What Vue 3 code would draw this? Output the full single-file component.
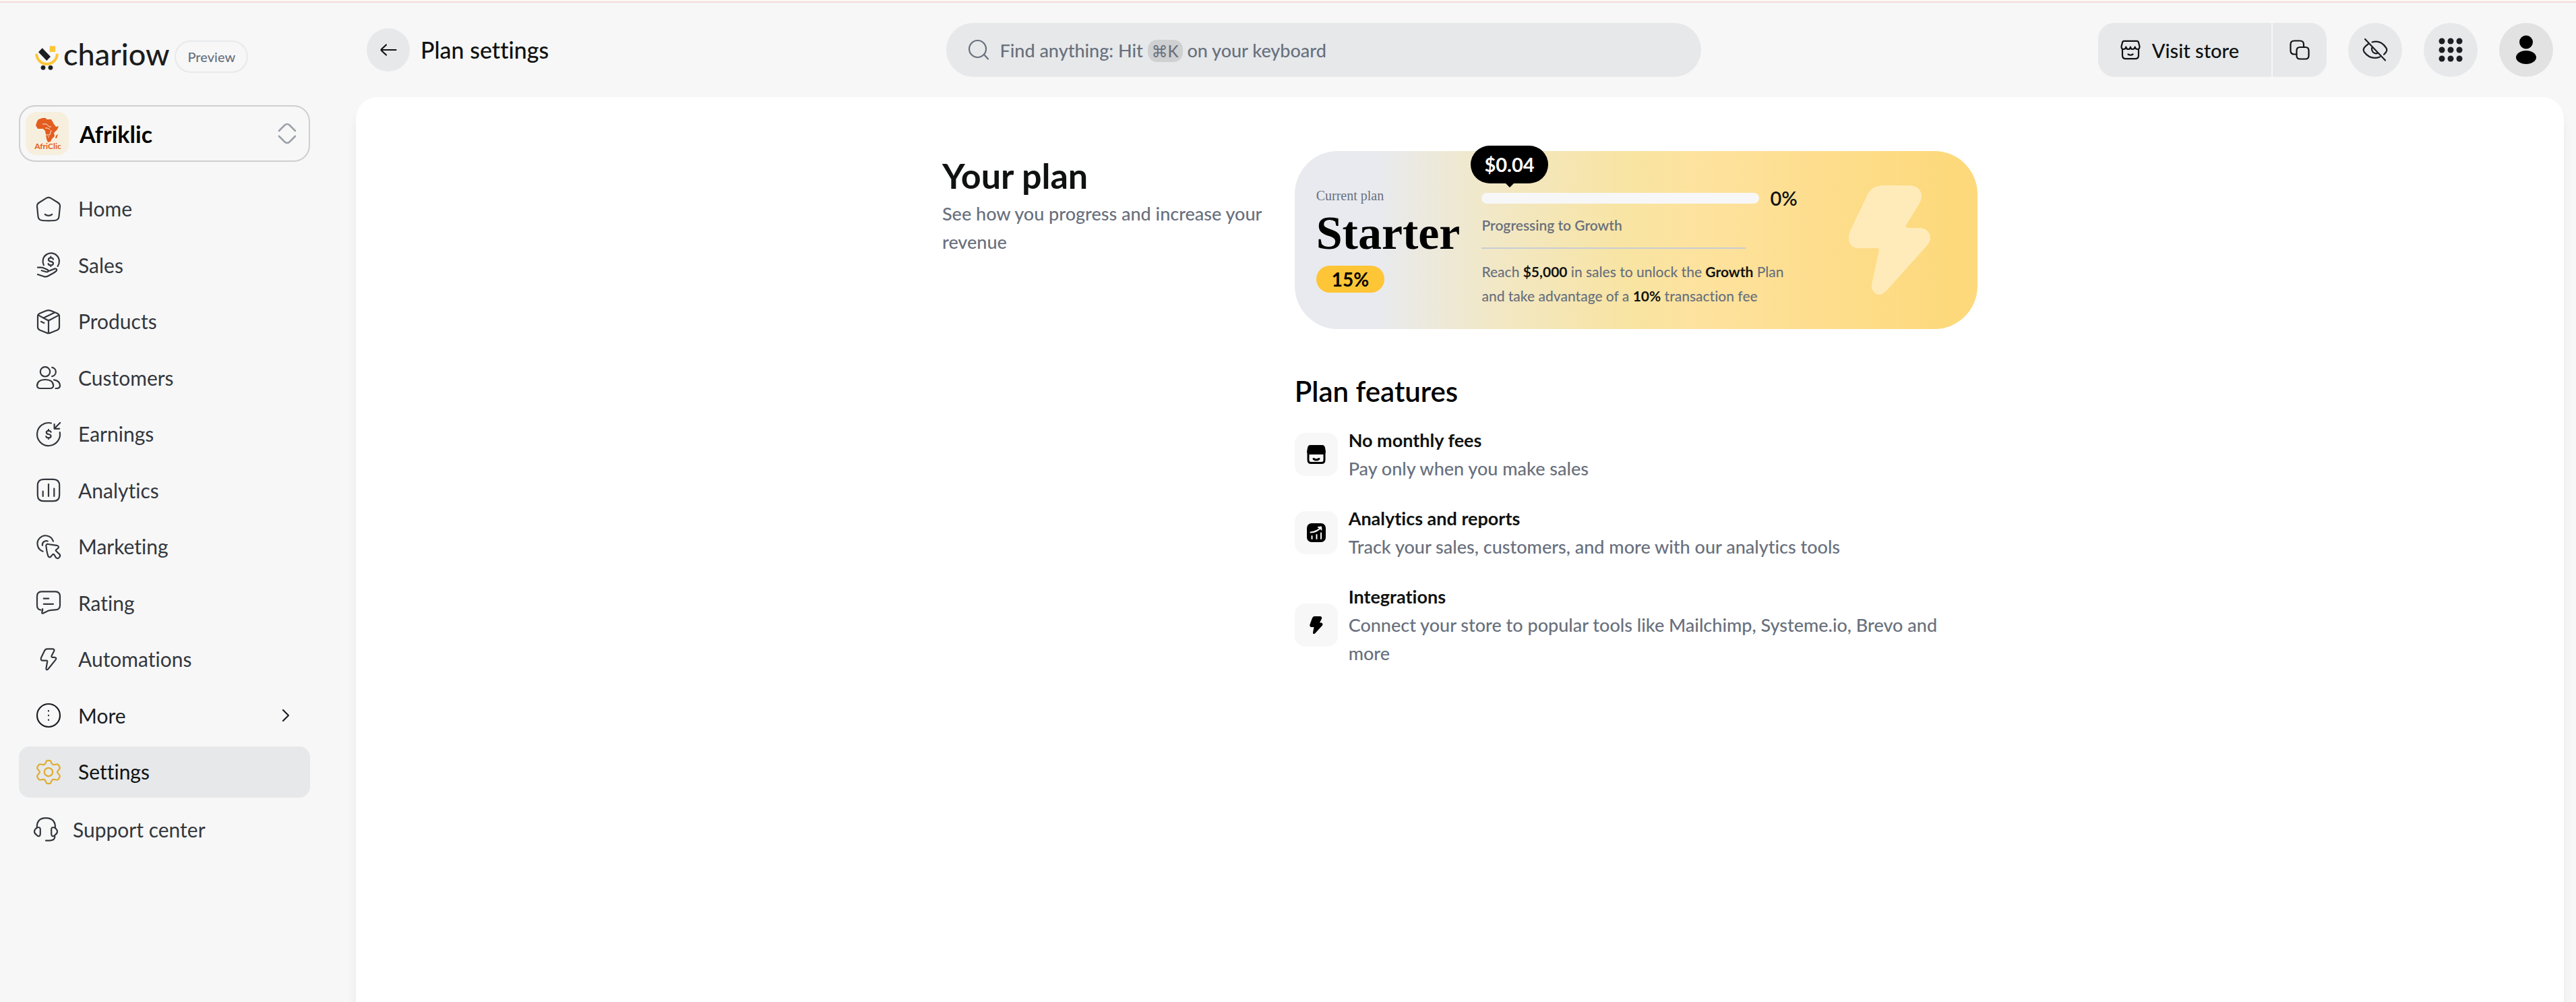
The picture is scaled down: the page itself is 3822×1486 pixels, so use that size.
<script setup>
const navItems = [
  { label: 'Home', icon: 'home' },
  { label: 'Sales', icon: 'sales' },
  { label: 'Products', icon: 'products' },
  { label: 'Customers', icon: 'customers' },
  { label: 'Earnings', icon: 'earnings' },
  { label: 'Analytics', icon: 'analytics' },
  { label: 'Marketing', icon: 'marketing' },
  { label: 'Rating', icon: 'rating' },
  { label: 'Automations', icon: 'automations' },
  { label: 'More', icon: 'more', strong: true, expandable: true },
  { label: 'Settings', icon: 'settings', active: true },
]

const icons = {
  home: ['M17 3.6Q20 2 23 3.6L34 10.5Q37.3 12.7 37 16L35.5 31Q35 36.5 29 37Q20 37.6 11 37Q5 36.5 4.5 31L3 16Q2.7 12.7 6 10.5Z', 'M14.8 28Q20 31.6 25.2 28'],
  sales: ['M12.9 20.2A12.2 12.2 0 1 1 33.6 21.8', 'M27 11.6Q26.5 9.3 23.3 9.3Q19.9 9.3 19.9 12Q19.9 14.3 23.3 14.8Q27 15.3 27 17.7Q27 20.3 23.3 20.3Q20 20.3 19.6 18M23.3 7.6V9.3M23.3 20.3V22', 'M4 23.7H8.5Q11.5 23.7 14.5 25.3L18.5 27Q20.8 28.6 18.8 30Q17.5 30.6 15.8 30L9.8 28.2', 'M19.6 29.2L29 25.6Q31.8 25 32.2 27Q32.4 28.8 28 31.5L19.5 36.3Q16 38.2 13 37L4 34'],
  products: ['M17.3 3.6Q20 2.6 22.7 3.6L33 7.8Q36 9.2 36 12V28Q36 31 33 32.5L23 36.6Q20 37.7 17 36.6L7 32.5Q4 31 4 28V12Q4 9.2 7 7.8Z', 'M4.7 10.4L17.5 17.2Q20 18.6 22.5 17.2L35.3 10.4M20 18.6V37', 'M12.5 14.4L28.6 6.8M9 20L13.4 22'],
  customers: ['M22.2 11.3A7.2 7.2 0 1 1 7.8 11.3A7.2 7.2 0 1 1 22.2 11.3Z', 'M25.2 4.8A6.8 6.8 0 0 1 25.2 18.2', 'M8 36H22Q27 36 27.2 32Q26.8 23 15.1 23Q3.4 23 3 32Q3.2 36 8 36Z', 'M28 23.4Q36.6 24.6 37.1 31.8Q37 35.9 32 36H30.5'],
  earnings: ['M24 3.5A17 17 0 1 0 36.8 17.2', 'M37.2 3L29 11.3M28.6 5V11.8H36.2', 'M23.6 16.8Q23 14.8 20 14.8Q16.8 14.8 16.8 17.2Q16.8 19.5 20 20Q23.6 20.5 23.6 22.8Q23.6 25.3 20 25.3Q16.8 25.3 16.4 23.2M20 13V14.8M20 25.3V27'],
  analytics: ['M13 3.8H27Q36.2 3.8 36.2 13V27Q36.2 36.2 27 36.2H13Q3.8 36.2 3.8 27V13Q3.8 3.8 13 3.8Z', 'M11.7 21.7V29M20 11V29M28.3 17.5V29'],
  marketing: ['M11.7 26.7A12 12 0 1 1 27 11.8', 'M10.9 17.8A5.8 5.8 0 0 1 18.8 11.6', 'M16.4 18.6Q16.2 15.6 19.2 16L31.8 17.8Q36.6 19.2 34.2 22L31 24.6Q30.4 25.4 31.2 26.2L36 30.6Q38.2 33 36.2 35.4Q33.8 38.4 31 36L28.4 31.6Q27.2 30 26 31.4L23.6 34.4Q21.2 36.8 19.4 33.6Q17.4 28 16.4 18.6Z'],
  rating: ['M8.6 30.6Q3 30 3 24V10.4Q3 3.6 9.8 3.4H30.2Q37 3.6 37 10.4V23.4Q37 30.2 30.2 30.4L22 31.2Q19 31.8 16 33.6L12 35.6Q10 36.2 10.2 34Q11.4 31 11.2 29', 'M12.8 13.7H20.2M12.8 21.8H27'],
  automations: ['M18.4 4.4H26Q29.4 4.6 28.2 7.6L24.6 14.4Q23.8 16.6 26 16.8H29Q32.6 17.4 30.6 20.4L19.4 34.2Q16.8 36.8 16.4 33.6L18.2 23.2Q18.4 21.6 16.8 21.6H11.4Q7.6 21.2 9 17.6L14.2 6.8Q15.4 4.4 18.4 4.4Z'],
  more: ['M37 20A17 17 0 1 1 3 20A17 17 0 1 1 37 20Z', 'M20 13.2V13.4M20 19.9V20.1M20 26.6V26.8'],
  settings: ['M16.3 5Q17 2.9 19 2.9H21Q23 2.9 23.7 5Q24.7 8.6 27.2 9.1Q28.6 9.3 31.4 8.5Q33.8 7.9 35 9.9L36.4 12.4Q37.4 14.4 35.8 16Q33 18.6 33 20Q33 21.4 35.8 24Q37.4 25.6 36.4 27.6L35 30.1Q33.8 32.1 31.4 31.5Q28.6 30.7 27.2 30.9Q24.7 31.4 23.7 35Q23 37.1 21 37.1H19Q17 37.1 16.3 35Q15.3 31.4 12.8 30.9Q11.4 30.7 8.6 31.5Q6.2 32.1 5 30.1L3.6 27.6Q2.6 25.6 4.2 24Q7 21.4 7 20Q7 18.6 4.2 16Q2.6 14.4 3.6 12.4L5 9.9Q6.2 7.9 8.6 8.5Q11.4 9.3 12.8 9.1Q15.3 8.6 16.3 5Z', 'M26.2 20A6.2 6.2 0 1 1 13.8 20A6.2 6.2 0 1 1 26.2 20Z'],
  support: ['M6.8 17V15.4Q7.4 3.2 20 3.1Q33 3.2 34 15.4V17', 'M7.6 17.2Q11.8 16.2 11.8 20V27Q11.6 30.6 8.2 30L6 28Q3 26 3 23.2Q3 21 5 19Z', 'M32.4 17.2Q28.2 16.2 28.2 20V27Q28.4 30.6 31.8 30L34 28Q37 26 37 23.2Q37 21 35 19Z', 'M33.4 30.6Q33.4 36.2 26 36.6H20'],
}

const features = [
  { icon: 'store', title: 'No monthly fees', text: 'Pay only when you make sales' },
  { icon: 'chart', title: 'Analytics and reports', text: 'Track your sales, customers, and more with our analytics tools' },
  { icon: 'bolt', title: 'Integrations', text: 'Connect your store to popular tools like Mailchimp, Systeme.io, Brevo and more' },
]
</script>

<template>
  <div class="app">
    <div class="strip"></div>
    <div class="shell">
      <aside class="sidebar">
        <div class="brand">
          <svg class="brand-mark" viewBox="0 0 36 40" aria-hidden="true">
            <path d="M2.2 15.7A15.3 15.3 0 0 0 32.8 15.7" fill="none" stroke="#fec536" stroke-width="4" />
            <rect x="21.7" y="4.3" width="8.4" height="8.7" fill="#fec536" />
            <path d="M10.7 7.3L23 20L17.3 26L5 13.3Z" fill="#1c1d1e" />
            <circle cx="12" cy="36.3" r="3.4" fill="#1c1d1e" />
            <circle cx="23" cy="36.3" r="3.4" fill="#1c1d1e" />
          </svg>
          <span class="brand-name">chariow</span>
          <span class="brand-tag">Preview</span>
        </div>

        <div class="store-picker">
          <svg class="store-logo" viewBox="0 0 64 64" aria-hidden="true">
            <rect width="64" height="64" rx="16" fill="#f7efdd" />
            <path d="M19 11L25 9L30 9L31 11L38 11L42 18L45 22L49 21L47 26L42 31L43 36L39 40L37 44L33 45L31 40L30 34L29 28L26 25L18 25L15 20L17 14Z" fill="#e35d20" />
            <path d="M48 33L46 39L44 39L45 35Z" fill="#e35d20" />
            <path d="M22 25L25 34H36L38 27M26 36V38M34 36V38M25 18H31L35 22H38M29 24H33L36 26" fill="none" stroke="#f7efdd" stroke-width="1" />
            <text x="33" y="55" text-anchor="middle" font-size="12" font-weight="700" fill="#e35d20">AfriClic</text>
          </svg>
          <select class="store-select" aria-label="Store">
            <option>Afriklic</option>
          </select>
          <svg class="store-arrows" viewBox="0 0 32 36" aria-hidden="true">
            <path d="M4 14L12.5 5.5Q16 2.5 19.5 5.5L28 14M4 22L12.5 30.5Q16 33.5 19.5 30.5L28 22" />
          </svg>
        </div>

        <nav class="nav">
          <a v-for="item in navItems" :key="item.label" href="#" class="nav-link" :class="{ active: item.active, strong: item.strong }">
            <svg class="icon" :class="item.icon" viewBox="0 0 40 40" aria-hidden="true">
              <path v-for="d in icons[item.icon]" :key="d" :d="d" />
            </svg>
            <span>{{ item.label }}</span>
            <svg v-if="item.expandable" class="chevron" viewBox="0 0 16 20" aria-hidden="true"><path d="M4 2L12 10L4 18" /></svg>
          </a>
        </nav>

        <a href="#" class="nav-link support">
          <svg class="icon" viewBox="0 0 40 40" aria-hidden="true">
            <path v-for="d in icons.support" :key="d" :d="d" />
          </svg>
          <span>Support center</span>
        </a>
      </aside>

      <div class="workspace">
        <header class="header">
          <div class="page-head">
            <button class="back" aria-label="Back">
              <svg class="icon" viewBox="0 0 40 40"><path d="M9.5 20H31.5M17 12.5L10.5 18.5Q9 20 10.5 21.5L17 27.5" /></svg>
            </button>
            <h1>Plan settings</h1>
          </div>

          <label class="search">
            <svg class="icon" viewBox="0 0 40 40" aria-hidden="true"><path d="M31 18.5A12.5 12.5 0 1 1 6 18.5A12.5 12.5 0 1 1 31 18.5ZM29 28L34 33.5" /></svg>
            <span class="search-hint">Find anything: Hit <kbd>⌘K</kbd> on your keyboard</span>
            <input type="text" aria-label="Search" />
          </label>

          <div class="tools">
            <div class="visit">
              <button class="visit-store">
                <svg viewBox="0 0 32 32" aria-hidden="true">
                  <path d="M6.5 2.8H25.5Q27.5 2.8 28 5L29.5 11Q29.5 15 26.5 15Q23 15 22.7 11.5Q22 15 19 15Q16.3 15 16 11.5Q15.5 15 12.8 15Q9.8 15 9.3 11.5Q9 15 5.5 15Q2.5 15 2.5 11L4 5Q4.5 2.8 6.5 2.8Z" />
                  <path d="M4 15V24Q4 29.2 9 29.2H23Q28 29.2 28 24V15M12.5 22.5Q16 25 19.5 22.5" />
                </svg>
                Visit store
              </button>
              <button class="copy" aria-label="Copy store link">
                <svg viewBox="0 0 32 32"><path d="M11 22.5H8Q2.5 22.5 2.5 17V8Q2.5 2.5 8 2.5H16.5Q22 2.5 22 8V11M16.5 12H24.5Q29.5 12 29.5 17V24.5Q29.5 29.5 24.5 29.5H16.5Q11.5 29.5 11.5 24.5V17Q11.5 12 16.5 12Z" /></svg>
              </button>
            </div>
            <button class="round" aria-label="Hide amounts">
              <svg class="icon" viewBox="0 0 40 40"><path d="M5 4L35 35.5M15.5 8.5Q28 5 36 16.5Q38.5 20 36 23.5Q34.8 25.2 33 26.8M9.5 11.5Q6.5 13.5 4 16.5Q1.5 20 4 23.5Q13.5 35.5 27 30.5M15.5 16Q14 20 17 23.5Q20 26.5 24.3 24.5" /></svg>
            </button>
            <button class="round" aria-label="Apps">
              <svg class="icon dots" viewBox="0 0 40 40">
                <template v-for="y in [7, 20, 33]" :key="y">
                  <circle v-for="x in [7, 20, 33]" :key="x" :cx="x" :cy="y" r="4.5" />
                </template>
              </svg>
            </button>
            <button class="round avatar" aria-label="Account">
              <svg viewBox="0 0 48 48"><circle cx="24" cy="12.5" r="10" /><ellipse cx="24" cy="35" rx="15" ry="10" /></svg>
            </button>
          </div>
        </header>

        <main class="panel">
          <div class="content">
            <section class="intro">
              <h2>Your plan</h2>
              <p>See how you progress and increase your revenue</p>
            </section>

            <div class="details">
              <section class="plan-card">
                <div class="plan-current">
                  <span class="plan-label">Current plan</span>
                  <strong class="plan-name">Starter</strong>
                  <span class="plan-rate">15%</span>
                </div>
                <div class="plan-progress">
                  <div class="meter">
                    <span class="bubble">$0.04</span>
                    <progress id="growth" max="100" value="0"></progress>
                    <span class="percent">0%</span>
                  </div>
                  <label class="goal" for="growth">Progressing to Growth</label>
                  <hr />
                  <p>Reach <b>$5,000</b> in sales to unlock the <b>Growth</b> Plan<br />and take advantage of a <b>10%</b> transaction fee</p>
                </div>
                <svg class="plan-bolt" viewBox="0 0 122 164" aria-hidden="true">
                  <path d="M50 1H92Q108 2 109 17Q109 22 105 29L86 60Q85 63 88 64H106Q121 65 122 79Q122 84 118 89L58 156Q44 170 36 156Q34 152 36 143L46 97Q46 94 43 94H18Q0 94 1 78Q1 74 4 67L29 14Q35 2 50 1Z" />
                </svg>
              </section>

              <section class="features">
                <h3>Plan features</h3>
                <ul>
                  <li v-for="f in features" :key="f.title">
                    <span class="tile">
                      <svg v-if="f.icon === 'store'" viewBox="0 0 28 28" aria-hidden="true">
                        <path d="M5 0H23Q26 0 27 4L28 10Q28 13.5 25 14H3Q0 13.5 0 10L1 4Q2 0 5 0Z" />
                        <path d="M2 13V22Q2 26.5 6 26.5H22Q26 26.5 26 22V13M10 20.5Q14 23.5 18 20.5" class="line" />
                      </svg>
                      <svg v-else-if="f.icon === 'chart'" viewBox="0 0 28 28" aria-hidden="true">
                        <rect width="28" height="28" rx="7" />
                        <path d="M7.5 23V19M14.5 23V17M21 23V14.5M5.5 13.5Q15 13 20.5 6.5M17 6L21 5.5L21.5 9.5" class="knock" />
                      </svg>
                      <svg v-else viewBox="0 0 28 28" aria-hidden="true">
                        <path d="M11 1H20Q23 1.5 22 4.5L19 10.5H21.5Q24.5 11.5 23 14.5L12 26.5Q9 28.5 9 25L10.5 17H6.5Q3.5 16.5 4.5 13L8 3.5Q9 1 11 1Z" />
                      </svg>
                    </span>
                    <div>
                      <h4>{{ f.title }}</h4>
                      <p>{{ f.text }}</p>
                    </div>
                  </li>
                </ul>
              </section>
            </div>
          </div>
        </main>
      </div>
    </div>
  </div>
</template>

<style>
body {
  margin: 0;
  background: #f7f7f7;
}
</style>

<style scoped>
.app {
  display: flex;
  flex-direction: column;
  min-height: 100vh;
  font-family: Lato, 'Noto Sans', sans-serif;
  font-size: 27px;
  font-variant-ligatures: none;
  color: #101211;
}

h1,
h2,
h3,
h4,
p,
ul {
  margin: 0;
  padding: 0;
}

button,
input,
select {
  margin: 0;
  padding: 0;
  border: 0;
  background: none;
  font: inherit;
  color: inherit;
}

.strip {
  height: 2px;
  border-top: 2px solid #fdf8f5;
  background: #f5d9de;
}

.shell {
  display: flex;
  flex: 1;
}

svg {
  display: block;
  flex-shrink: 0;
}

.icon {
  width: 40px;
  height: 40px;
  fill: none;
  stroke: currentColor;
  stroke-width: 2.2;
  stroke-linecap: round;
  stroke-linejoin: round;
}

.sidebar {
  box-sizing: border-box;
  flex: 0 0 528px;
  padding: 56px 68px 32px 28px;
}

.brand {
  display: flex;
  align-items: center;
  padding-left: 24px;
  height: 48px;
}

.brand-mark {
  width: 36px;
  height: 40px;
}

.brand-name {
  margin: 0 8px 0 6px;
  padding-bottom: 8px;
  font-size: 45px;
  font-weight: 500;
  line-height: 40px;
  color: #1c1d1e;
}

.brand-tag {
  box-sizing: border-box;
  padding: 0 17px;
  border: 2px solid #e8e9ea;
  border-radius: 24px;
  font-size: 20px;
  font-weight: 500;
  line-height: 44px;
  color: #69707d;
}

.store-picker {
  display: flex;
  align-items: center;
  box-sizing: border-box;
  height: 84px;
  margin: 48px 0 32px;
  padding: 0 16px 0 8px;
  border: 2px solid #cfcfcf;
  border-radius: 24px;
}

.store-logo {
  width: 64px;
  height: 64px;
}

.store-select {
  flex: 1;
  min-width: 0;
  margin-left: 16px;
  appearance: none;
  font-size: 34px;
  font-weight: 700;
  color: #000;
}

.store-arrows {
  width: 32px;
  height: 36px;
  fill: none;
  stroke: #9ba1a9;
  stroke-width: 2.6;
  stroke-linecap: round;
}

.nav {
  display: flex;
  flex-direction: column;
  gap: 8px;
}

.nav-link {
  display: flex;
  align-items: center;
  gap: 24px;
  padding: 16px 24px;
  border-radius: 16px;
  font-size: 30px;
  line-height: 1.45;
  color: #33373d;
  text-decoration: none;
}

.nav-link.strong {
  color: #1b1e23;
}

.nav-link.active {
  background: #e6e8ea;
  color: #101211;
}

.icon.settings {
  stroke: #dfac30;
}

.chevron {
  width: 16px;
  height: 20px;
  margin-left: auto;
  margin-right: 4px;
  fill: none;
  stroke: currentColor;
  stroke-width: 2.2;
  stroke-linecap: round;
  stroke-linejoin: round;
}

.support {
  gap: 20px;
  margin-top: 10px;
  padding: 16px 20px;
}

.workspace {
  display: flex;
  flex-direction: column;
  flex: 1;
  min-width: 0;
  padding-right: 18px;
}

.header {
  display: flex;
  align-items: center;
  justify-content: space-between;
  padding: 30px 16px;
}

.page-head {
  display: flex;
  align-items: center;
  gap: 16px;
}

.page-head h1 {
  font-size: 34px;
  font-weight: 500;
  line-height: 40px;
}

.back {
  display: grid;
  place-items: center;
  width: 64px;
  height: 64px;
  border-radius: 50%;
  background: #e6e8ea;
}

.search {
  display: flex;
  align-items: center;
  box-sizing: border-box;
  flex: 0 1 1120px;
  height: 80px;
  padding: 0 28px;
  gap: 12px;
  border-radius: 40px;
  background: #e6e8ea;
  color: #69707d;
}

.search-hint {
  font-weight: 500;
  white-space: nowrap;
}

.search kbd {
  padding: 2px 6px;
  border-radius: 14px;
  background: #cfd0d2;
  font-family: Lato, 'DejaVu Sans', sans-serif;
  font-size: 24px;
}

.search input {
  flex: 1;
  min-width: 0;
  outline: 0;
}

.tools {
  display: flex;
  gap: 32px;
}

.visit {
  display: flex;
  gap: 2px;
}

.visit svg {
  width: 32px;
  height: 32px;
  fill: none;
  stroke: currentColor;
  stroke-width: 2.2;
  stroke-linecap: round;
  stroke-linejoin: round;
}

.visit-store {
  display: flex;
  align-items: center;
  gap: 16px;
  height: 80px;
  padding: 0 48px 0 32px;
  border-radius: 24px 0 0 24px;
  background: #e6e8ea;
  font-size: 29px;
  font-weight: 500;
}

.copy {
  display: grid;
  place-items: center;
  width: 80px;
  border-radius: 0 24px 24px 0;
  background: #e6e8ea;
}

.round {
  display: grid;
  place-items: center;
  width: 80px;
  height: 80px;
  border-radius: 50%;
  background: #e6e8ea;
  color: #1b1e23;
}

.dots {
  fill: currentColor;
  stroke: none;
}

.avatar {
  background: #e2e2e2;
  color: #000;
}

.avatar svg {
  width: 48px;
  height: 48px;
}

.panel {
  flex: 1;
  padding: 80px 32px;
  border-radius: 32px 32px 0 0;
  background: #fff;
  box-shadow: 0 16px 16px rgba(0, 0, 0, 0.06);
}

.content {
  display: grid;
  grid-template-columns: repeat(3, 1fr);
  gap: 32px;
  max-width: 1536px;
  margin: 0 auto;
}

.details {
  grid-column: span 2;
}

.intro {
  padding-top: 8px;
  font-weight: 500;
  line-height: 42px;
  color: #69707d;
}

.intro h2 {
  margin-bottom: 8px;
  font-size: 52px;
  font-weight: 700;
  line-height: 56px;
  color: #101211;
}

.plan-card {
  display: flex;
  align-items: center;
  gap: 32px;
  box-sizing: border-box;
  height: 264px;
  padding: 0 70px 0 32px;
  border-radius: 64px;
  background: linear-gradient(90deg, #e8eaef 12%, #f1e8c8 28%, #f8e4a3 48%, #fee29c 62%, #fdd97c 96%);
}

.plan-current {
  display: flex;
  flex-direction: column;
  align-items: flex-start;
  padding-bottom: 4px;
  font-family: 'Liberation Serif', serif;
}

.plan-label {
  font-size: 20px;
  line-height: 32px;
  color: #69707d;
}

.plan-name {
  margin-bottom: 8px;
  font-size: 70px;
  line-height: 80px;
  color: #000;
}

.plan-rate {
  padding: 0 23px;
  border-radius: 20px;
  background: #fec536;
  font-family: Lato, sans-serif;
  font-size: 28px;
  font-weight: 700;
  line-height: 40px;
  color: #000;
}

.plan-progress {
  flex: 1;
  padding-top: 20px;
  font-size: 21px;
  font-weight: 500;
  line-height: 36px;
  color: #69707d;
}

.meter {
  position: relative;
  display: flex;
  align-items: center;
  gap: 16px;
  margin-bottom: 4px;
}

.meter progress {
  width: 412px;
  height: 16px;
  appearance: none;
  border: 0;
  border-radius: 8px;
  overflow: hidden;
  background: #f7f7f7;
}

.meter progress::-webkit-progress-bar {
  background: #f7f7f7;
}

.meter progress::-webkit-progress-value {
  background: #000;
}

.percent {
  font-size: 29px;
  font-weight: 600;
  color: #101211;
}

.bubble {
  position: absolute;
  left: -16px;
  bottom: 40px;
  padding: 0 20px;
  border-radius: 28px;
  background: #000;
  color: #fff;
  font-size: 29px;
  font-weight: 700;
  line-height: 56px;
}

.bubble::after {
  content: '';
  position: absolute;
  left: 50%;
  top: 100%;
  margin-left: -6px;
  border: 6px solid transparent;
  border-top-color: #000;
}

.goal {
  display: block;
  font-weight: 600;
}

.plan-progress hr {
  width: 392px;
  height: 2px;
  margin: 15px 0 16px;
  border: 0;
  background: #c9ccd3;
}

.plan-progress b {
  color: #101211;
}

.plan-bolt {
  width: 122px;
  height: 164px;
  fill: #ffebba;
}

.features {
  margin-top: 64px;
}

.features h3 {
  font-size: 42px;
  line-height: 56px;
  font-weight: 600;
  color: #000;
}

.features ul {
  display: flex;
  flex-direction: column;
  gap: 32px;
  margin-top: 24px;
  list-style: none;
}

.features li {
  display: flex;
  align-items: center;
  gap: 16px;
  font-weight: 500;
  line-height: 42px;
  color: #69707d;
}

.features h4 {
  font-size: 27px;
  font-weight: 700;
  color: #101211;
}

.tile {
  display: grid;
  place-items: center;
  flex: 0 0 64px;
  height: 64px;
  border-radius: 16px;
  background: #f7f7f7;
}

.tile svg {
  width: 28px;
  height: 28px;
  fill: #000;
}

.tile .line {
  fill: none;
  stroke: #000;
  stroke-width: 3;
  stroke-linecap: round;
}

.tile .knock {
  fill: none;
  stroke: #f7f7f7;
  stroke-width: 2;
  stroke-linecap: round;
}
</style>
